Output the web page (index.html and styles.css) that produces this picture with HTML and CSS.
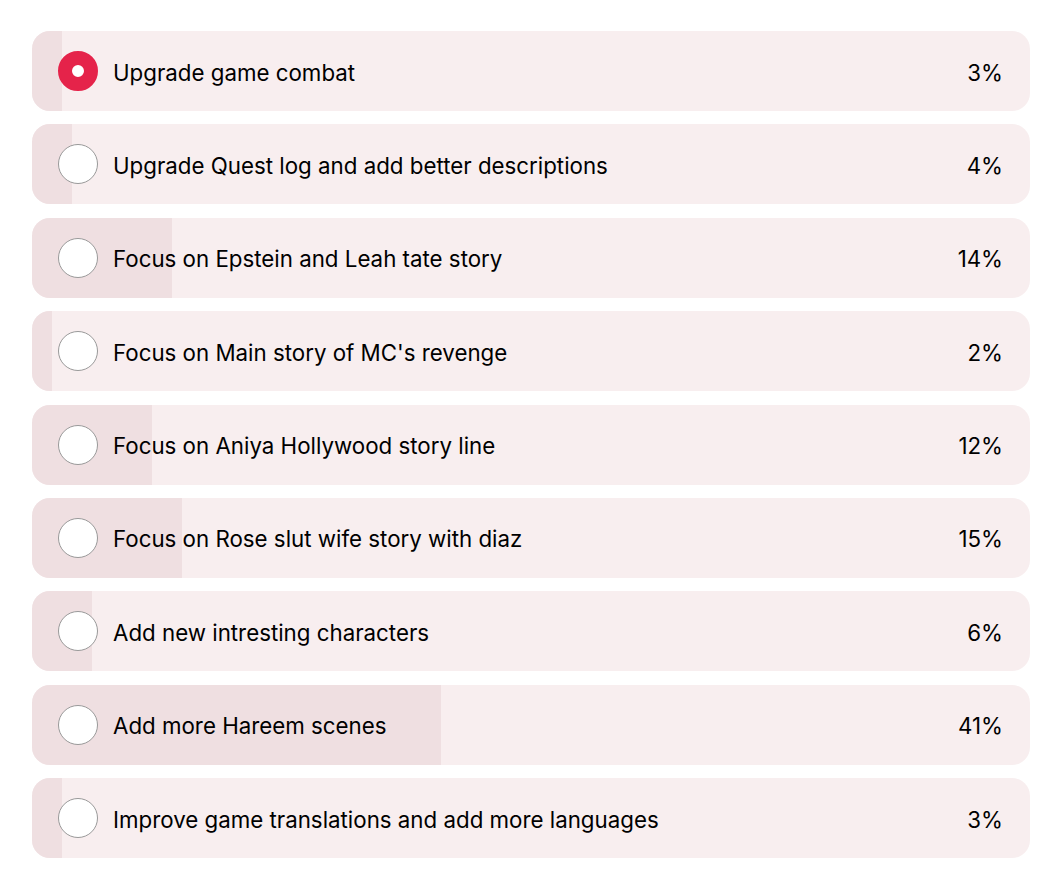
FILE: index.html
```html
<!DOCTYPE html>
<html lang="en">
<head>
    <meta charset="UTF-8">
    <meta name="viewport" content="width=device-width, initial-scale=1.0">
    <title>Poll</title>
    <link rel="stylesheet" href="styles.css">
</head>
<body>

    <ul class="poll">
        <li class="choice selected">
            <div class="bar" style="width: 3%"></div>
            <span class="radio"></span>
            <span class="label">Upgrade game combat</span>
            <span class="pct">3%</span>
        </li>
        <li class="choice">
            <div class="bar" style="width: 4%"></div>
            <span class="radio"></span>
            <span class="label">Upgrade Quest log and add better descriptions</span>
            <span class="pct">4%</span>
        </li>
        <li class="choice">
            <div class="bar" style="width: 14%"></div>
            <span class="radio"></span>
            <span class="label">Focus on Epstein and Leah tate story</span>
            <span class="pct">14%</span>
        </li>
        <li class="choice">
            <div class="bar" style="width: 2%"></div>
            <span class="radio"></span>
            <span class="label">Focus on Main story of MC's revenge</span>
            <span class="pct">2%</span>
        </li>
        <li class="choice">
            <div class="bar" style="width: 12%"></div>
            <span class="radio"></span>
            <span class="label">Focus on Aniya Hollywood story line</span>
            <span class="pct">12%</span>
        </li>
        <li class="choice">
            <div class="bar" style="width: 15%"></div>
            <span class="radio"></span>
            <span class="label">Focus on Rose slut wife story with diaz</span>
            <span class="pct">15%</span>
        </li>
        <li class="choice">
            <div class="bar" style="width: 6%"></div>
            <span class="radio"></span>
            <span class="label">Add new intresting characters</span>
            <span class="pct">6%</span>
        </li>
        <li class="choice">
            <div class="bar" style="width: 41%"></div>
            <span class="radio"></span>
            <span class="label">Add more Hareem scenes</span>
            <span class="pct">41%</span>
        </li>
        <li class="choice">
            <div class="bar" style="width: 3%"></div>
            <span class="radio"></span>
            <span class="label">Improve game translations and add more languages</span>
            <span class="pct">3%</span>
        </li>
    </ul>

</body>
</html>
```

FILE: styles.css
```css
body{
    margin: 0;
    background-color: #fff;
    font-family: Inter, "Noto Sans", sans-serif;
    color: #000;
}
.poll{
    list-style: none;
    margin: 0;
    padding: 31px 22px 0 32px;
    display: flex;
    flex-direction: column;
    gap: 13.375px;
}
.choice{
    position: relative;
    overflow: hidden;
    display: flex;
    align-items: center;
    height: 80px;
    padding: 0 27px 0 26px;
    border-radius: 18px;
    background-color: #f8eeef;
    box-sizing: border-box;
}
.bar{
    position: absolute;
    left: 0;
    top: 0;
    bottom: 0;
    background-color: #efdfe1;
}
.radio{
    position: relative;
    flex: none;
    width: 40px;
    height: 40px;
    border-radius: 50%;
    border: 1px solid #999;
    background-color: #fff;
    box-sizing: border-box;
}
.selected .radio{
    border: 14px solid #e5234a;
}
.label{
    position: relative;
    flex: 1;
    margin-left: 15px;
    font-size: 22.3px;
    padding-top: 2px;
}
.pct{
    position: relative;
    font-size: 22.3px;
    padding-top: 2px;
}
```
